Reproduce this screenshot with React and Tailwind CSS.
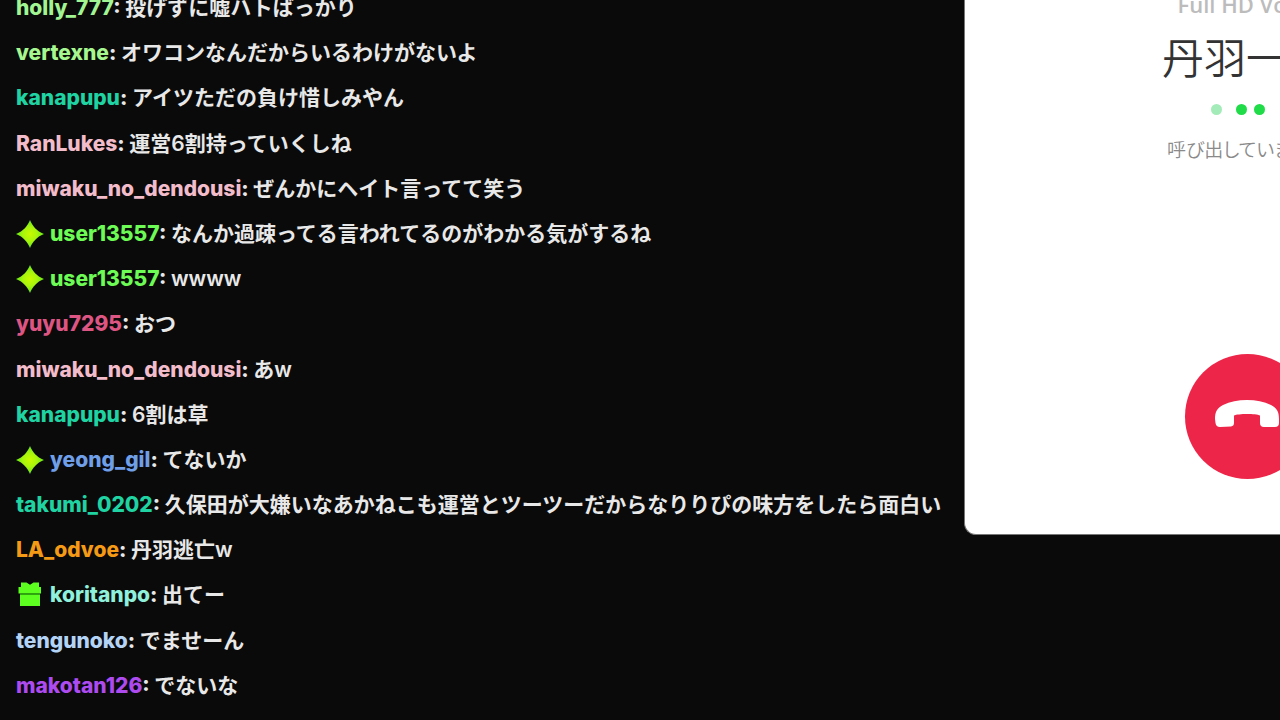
const messages = [
  { user: "holly_777", color: "text-[#a2f593]", text: "投げずに嘘ハトばっかり" },
  { user: "vertexne", color: "text-[#a6f78f]", text: "オワコンなんだからいるわけがないよ" },
  { user: "kanapupu", color: "text-[#1fd3a2]", text: "アイツただの負け惜しみやん" },
  { user: "RanLukes", color: "text-[#f2bccb]", text: "運営6割持っていくしね" },
  { user: "miwaku_no_dendousi", color: "text-[#f2bccb]", text: "ぜんかにヘイト言ってて笑う" },
  { user: "user13557", color: "text-[#6dfb55]", badge: "spark", text: "なんか過疎ってる言われてるのがわかる気がするね" },
  { user: "user13557", color: "text-[#6dfb55]", badge: "spark", text: "wwww" },
  { user: "yuyu7295", color: "text-[#dd5583]", text: "おつ" },
  { user: "miwaku_no_dendousi", color: "text-[#f2bccb]", text: "あw" },
  { user: "kanapupu", color: "text-[#1fd3a2]", text: "6割は草" },
  { user: "yeong_gil", color: "text-[#6f9fe8]", badge: "spark", text: "てないか" },
  { user: "takumi_0202", color: "text-[#1fd3a2]", text: "久保田が大嫌いなあかねこも運営とツーツーだからなりりぴの味方をしたら面白い" },
  { user: "LA_odvoe", color: "text-[#f59a15]", text: "丹羽逃亡w" },
  { user: "koritanpo", color: "text-[#8ff0dc]", badge: "gift", text: "出てー" },
  { user: "tengunoko", color: "text-[#b4d4f7]", text: "でませーん" },
  { user: "makotan126", color: "text-[#ad4bf0]", text: "でないな" },
];

function SparkBadge() {
  return (
    <svg viewBox="0 0 28 28" className="size-7 shrink-0" aria-hidden="true">
      <defs>
        <radialGradient id="spark">
          <stop offset="0" stopColor="#c8fa00" />
          <stop offset="0.5" stopColor="#a8f50c" />
          <stop offset="1" stopColor="#62e81c" />
        </radialGradient>
      </defs>
      <path d="M14 0C16.500 6 20.500 11 28 14C20.500 17 16.500 22 14 28C11.500 22 7.500 17 0 14C7.500 11 11.500 6 14 0Z" fill="url(#spark)" />
    </svg>
  );
}

function GiftBadge() {
  return (
    <svg viewBox="0 0 28 28" className="size-7 shrink-0" aria-hidden="true">
      <path d="M5 1.500h5.500l3.500 2.300 3.500-2.300H23v4.500h2v6.500H2.500V6H5Z" fill="#5cff20" />
      <path d="M4 13.700h20V25H4Z" fill="#5cff20" />
      <path d="M4 12.200h20v1.800H4Z" fill="#2fa80f" />
    </svg>
  );
}

function Message({ user, color, badge, text }) {
  return (
    <li className="flex items-center gap-1.5 whitespace-nowrap">
      {badge === "spark" && <SparkBadge />}
      {badge === "gift" && <GiftBadge />}
      <p>
        <span className={`font-extrabold ${color}`}>{user}</span>
        <span className="font-extrabold">: </span>
        <span className="font-semibold">{text}</span>
      </p>
    </li>
  );
}

function CallWindow() {
  return (
    <aside className="w-[316px] shrink-0 self-start overflow-hidden rounded-bl-xl border-b border-l border-[#777] bg-white">
      <div className="flex h-[534px] w-[564px] flex-col items-center">
        <p className="-mt-3 font-['Open_Sans','Noto_Sans',sans-serif] text-[22px] leading-8 font-semibold text-[#bcbcbc]">Full HD Voice</p>
        <h1 className="mt-1.5 w-[170px] font-['Noto_Sans_CJK_JP',sans-serif] text-[42px] leading-[60px] font-[350] text-[#333]">丹羽一</h1>
        <div className="mt-[18px] flex w-[72px] items-center" aria-hidden="true">
          <span className="size-[11px] shrink-0 rounded-full bg-[#a3ecb9]" />
          <span className="ml-3.5 size-[11px] shrink-0 rounded-full bg-[#1fdc48]" />
          <span className="ml-[7px] size-[11px] shrink-0 rounded-full bg-[#1fdc48]" />
        </div>
        <p className="mt-[18px] w-40 font-['Noto_Sans_CJK_JP',sans-serif] text-[19px] leading-8 font-[350] whitespace-nowrap text-[#8a8a8a] [font-feature-settings:'palt']">呼び出しています</p>
        <button type="button" aria-label="通話を終了" className="mt-auto mb-[55px] flex size-[125px] items-center justify-center rounded-full bg-[#ed2548]">
          <svg viewBox="0 0 64 34" className="h-[34px] w-16" fill="#fff" aria-hidden="true">
            <path d="M0 18C0 11 2 7 8 4C15 0.500 23 -1 32 -1S49 0.500 56 4C62 7 64 11 64 18V22Q64 26 60 26H49Q45 26 45 22V14.500C41 12.500 23 12.500 19 14.500V22Q19 25 16 25.500L5 26Q1 26 0.500 22Z" transform="translate(0 1)" />
          </svg>
        </button>
      </div>
    </aside>
  );
}

export default function App() {
  return (
    <main className="flex h-screen overflow-hidden bg-[#0a0a0a]">
      <ol
        aria-label="チャット"
        className="-mt-2 flex min-w-0 flex-1 flex-col justify-between pb-[18px] pl-4 font-['Inter','Noto_Sans_CJK_JP',sans-serif] text-[21px] leading-8 text-[#e8e8e8]"
      >
        {messages.map((message, index) => (
          <Message key={index} {...message} />
        ))}
      </ol>
      <CallWindow />
    </main>
  );
}
